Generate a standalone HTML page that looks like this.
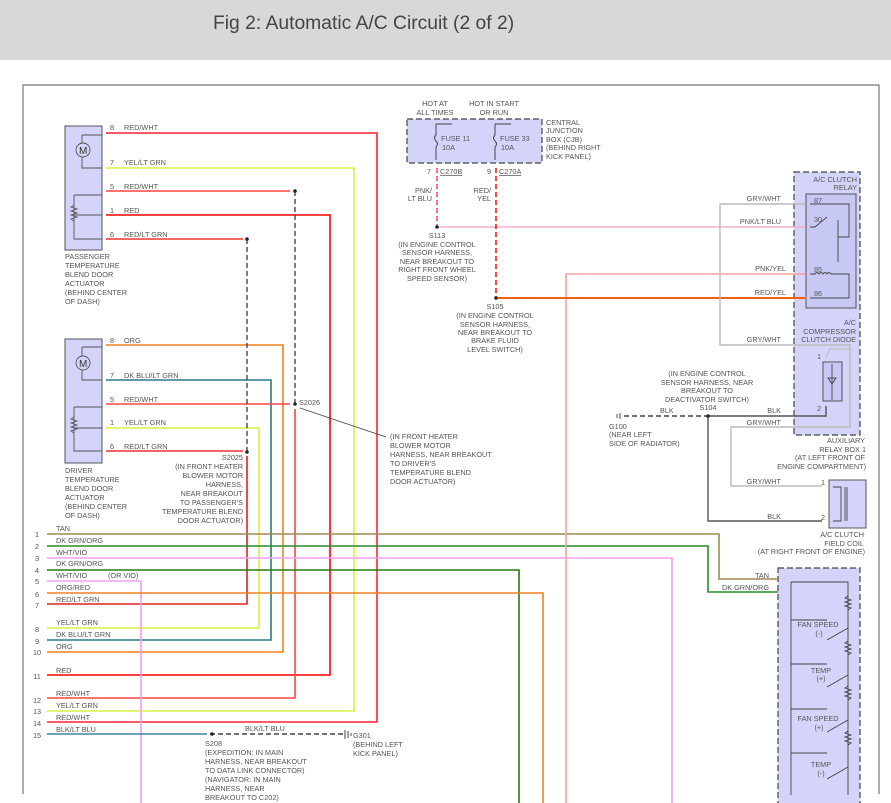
<!DOCTYPE html>
<html><head><meta charset="utf-8"><style>
html,body{margin:0;padding:0;background:#fff;width:891px;height:803px;overflow:hidden}
.hd{position:absolute;left:0;top:0;width:891px;height:60px;background:#d8d8d8}
.hd span{position:absolute;left:213px;top:13px;font:19.3px "Liberation Sans",sans-serif;color:#444}
svg{position:absolute;left:0;top:0}
text{font-family:"Liberation Sans",sans-serif;font-size:7.3px;fill:#555}
</style></head><body>
<div class="hd"><span>Fig 2: Automatic A/C Circuit (2 of 2)</span></div>
<svg width="891" height="803" viewBox="0 0 891 803">
<g fill="none">
<path d="M23 794V85H879V794" stroke="#777" stroke-width="1.2"/>
<rect x="65" y="126" width="37" height="124" fill="#d4d4fa" stroke="#555"/>
<rect x="65" y="339" width="37" height="124" fill="#d4d4fa" stroke="#555"/>
<rect x="407" y="119" width="135" height="44" fill="#d4d4fa" stroke="#444" stroke-dasharray="6,3" stroke-width="1.2"/>
<rect x="794" y="172" width="66" height="263" fill="#d4d4fa" stroke="#444" stroke-dasharray="6,3" stroke-width="1.2"/>
<rect x="806" y="194" width="50" height="114" fill="#c8c8f4" stroke="#555"/>
<rect x="823" y="362" width="19" height="39" fill="#c8c8f4" stroke="#555"/>
<rect x="829" y="480" width="37" height="48" fill="#d4d4fa" stroke="#555"/>
<rect x="778" y="568" width="82" height="240" fill="#d4d4fa" stroke="#444" stroke-dasharray="6,3" stroke-width="1.2"/>
<g stroke="#555" stroke-width="0.9">
<circle cx="83" cy="150" r="7"/><path d="M82 135H102M82 135V143M82 157V168H102M74 195H102M74 195V239H102M74 215H102M74 205l-3 2 6 2-6 2 6 2-6 2 6 2-6 2 3 2"/>
<circle cx="83" cy="363" r="7"/><path d="M82 347H102M82 347V356M82 370V380H102M74 407H102M74 407V451H102M74 428H102M74 417l-3 2 6 2-6 2 6 2-6 2 6 2-6 2 3 2"/>
</g>
<g stroke-width="1.6">
<path d="M106 133H377V722H47" stroke="#f23"/>
<path d="M106 168H354V711H47" stroke="#d8f040"/>
<path d="M106 191H290" stroke="#f44"/>
<path d="M106 215H330V675H47" stroke="#f00"/>
<path d="M106 239H243" stroke="#e33"/>
<path d="M106 345H283V652H47" stroke="#f08020"/>
<path d="M106 380H271V640H47" stroke="#2a7a8a"/>
<path d="M106 404H290" stroke="#f44"/>
<path d="M106 428H259V628H47" stroke="#d8f040"/>
<path d="M106 451H243" stroke="#e33"/>
<path d="M295 409V698H47" stroke="#f44"/>
<path d="M247 456V604H47" stroke="#d22"/>
<path d="M47 534H719V579H778" stroke="#a08a50"/>
<path d="M47 546H708V592H778" stroke="#2a8a2a"/>
<path d="M47 558H672V803" stroke="#f0a0f0"/>
<path d="M47 570H519V803" stroke="#2a7a10"/>
<path d="M47 581H141V803" stroke="#f0a0f0"/>
<path d="M47 593H543V803" stroke="#f08020"/>
<path d="M47 734H207" stroke="#1a6a8a" stroke-width="1.2"/>
<path d="M566 803V274H805" stroke="#f9a0a0"/>
<path d="M437 227H805" stroke="#f4b0c8"/>
<path d="M496 298H805" stroke="#f06010" stroke-width="2"/>
</g>
<g stroke-dasharray="5,3" stroke-width="1.4">
<path d="M295 191V404" stroke="#444"/>
<path d="M247 239V452" stroke="#444"/>
<path d="M437 168V227" stroke="#f37"/>
<path d="M496 168V298" stroke="#e00"/>
<path d="M210 734H343" stroke="#444"/>
<path d="M624 416H708" stroke="#444"/>
</g>
<path d="M805 204H720V345H850V427H731V486H822" stroke="#bbb" stroke-width="1.4"/>
<path d="M708 416H826V406M708 416V521H822" stroke="#555" stroke-width="1.4"/>
<path d="M826 357l4-8h20" stroke="#bbb"/>
<path d="M345 730v9M348 731v7M351 733v3M620 413v6M617 414v4" stroke="#444"/>
<g stroke="#444"><path d="M436 124V135q-3 3 0 6q3 3 0 6V160M436 124H452M495 124V135q-3 3 0 6q3 3 0 6V160M495 124H511"/></g>
<g stroke="#444" stroke-width="0.9">
<path d="M810 204H849V237H838M810 227H815l12-10M838 220V262M810 274H815q2-3 4 0q2-3 4 0q2-3 4 0q2-3 4 0H849V298H810"/>
<path d="M832 364V400M828 378h8l-4 6z"/>
<path d="M833 487h8v34h-8M845 487v34M847 487v34"/>
<path d="M791 582H848V795M791 582V795M791 620H827M791 664H827M791 709H827M791 753H827"/>
<path d="M848 596l-3 2 6 2-6 2 6 2-6 2 6 2-3 2M848 641l-3 2 6 2-6 2 6 2-6 2 6 2-3 2M848 686l-3 2 6 2-6 2 6 2-6 2 6 2-3 2M848 731l-3 2 6 2-6 2 6 2-6 2 6 2-3 2"/>
<path d="M827 640l21-12M827 687l21-12M827 732l21-12M827 779l21-12"/>
</g>
</g>
<g fill="#222">
<circle cx="295" cy="191" r="1.8"/><circle cx="247" cy="239" r="1.8"/><circle cx="295" cy="404" r="1.8"/><circle cx="247" cy="452" r="1.8"/>
<circle cx="437" cy="227" r="1.8"/><circle cx="496" cy="298" r="1.8"/><circle cx="708" cy="416" r="1.8"/><circle cx="212" cy="734" r="1.8"/>
</g>
<path d="M300 408L386 437" stroke="#444" stroke-width="0.8"/>
<text x="79" y="154" style="font-size:10px;fill:#333">M</text><text x="79" y="367" style="font-size:10px;fill:#333">M</text>
<text x="110" y="130">8</text><text x="124" y="130">RED/WHT</text>
<text x="110" y="165">7</text><text x="124" y="165">YEL/LT GRN</text>
<text x="110" y="189">5</text><text x="124" y="189">RED/WHT</text>
<text x="110" y="213">1</text><text x="124" y="213">RED</text>
<text x="110" y="237">6</text><text x="124" y="237">RED/LT GRN</text>
<text x="110" y="343">8</text><text x="124" y="343">ORG</text>
<text x="110" y="378">7</text><text x="124" y="378">DK BLU/LT GRN</text>
<text x="110" y="402">5</text><text x="124" y="402">RED/WHT</text>
<text x="110" y="425">1</text><text x="124" y="425">YEL/LT GRN</text>
<text x="110" y="449">6</text><text x="124" y="449">RED/LT GRN</text>
<text x="65" y="259">PASSENGER</text><text x="65" y="268">TEMPERATURE</text><text x="65" y="277">BLEND DOOR</text><text x="65" y="286">ACTUATOR</text><text x="65" y="295">(BEHIND CENTER</text><text x="65" y="304">OF DASH)</text>
<text x="65" y="473">DRIVER</text><text x="65" y="482">TEMPERATURE</text><text x="65" y="491">BLEND DOOR</text><text x="65" y="500">ACTUATOR</text><text x="65" y="509">(BEHIND CENTER</text><text x="65" y="518">OF DASH)</text>
<text x="299" y="405">S2026</text>
<g text-anchor="end"><text x="243" y="460">S2025</text><text x="243" y="469">(IN FRONT HEATER</text><text x="243" y="478">BLOWER MOTOR</text><text x="243" y="487">HARNESS,</text><text x="243" y="496">NEAR BREAKOUT</text><text x="243" y="505">TO PASSENGER'S</text><text x="243" y="514">TEMPERATURE BLEND</text><text x="243" y="523">DOOR ACTUATOR)</text></g>
<text x="390" y="439">(IN FRONT HEATER</text><text x="390" y="448">BLOWER MOTOR</text><text x="390" y="457">HARNESS, NEAR BREAKOUT</text><text x="390" y="466">TO DRIVER'S</text><text x="390" y="475">TEMPERATURE BLEND</text><text x="390" y="484">DOOR ACTUATOR)</text>
<g text-anchor="middle"><text x="37" y="537">1</text><text x="37" y="549">2</text><text x="37" y="561">3</text><text x="37" y="573">4</text><text x="37" y="584">5</text><text x="37" y="597">6</text><text x="37" y="608">7</text><text x="37" y="632">8</text><text x="37" y="644">9</text><text x="37" y="655">10</text><text x="37" y="679">11</text><text x="37" y="703">12</text><text x="37" y="714">13</text><text x="37" y="726">14</text><text x="37" y="738">15</text></g>
<text x="56" y="531">TAN</text><text x="56" y="543">DK GRN/ORG</text><text x="56" y="555">WHT/VIO</text><text x="56" y="566">DK GRN/ORG</text><text x="56" y="578">WHT/VIO</text><text x="108" y="578">(OR VIO)</text><text x="56" y="590">ORG/RED</text><text x="56" y="602">RED/LT GRN</text><text x="56" y="625">YEL/LT GRN</text><text x="56" y="637">DK BLU/LT GRN</text><text x="56" y="649">ORG</text><text x="56" y="673">RED</text><text x="56" y="696">RED/WHT</text><text x="56" y="708">YEL/LT GRN</text><text x="56" y="720">RED/WHT</text><text x="56" y="732">BLK/LT BLU</text>
<text x="245" y="731">BLK/LT BLU</text>
<text x="205" y="746">S208</text><text x="205" y="755">(EXPEDITION: IN MAIN</text><text x="205" y="764">HARNESS, NEAR BREAKOUT</text><text x="205" y="773">TO DATA LINK CONNECTOR)</text><text x="205" y="782">(NAVIGATOR: IN MAIN</text><text x="205" y="791">HARNESS, NEAR</text><text x="205" y="800">BREAKOUT TO C202)</text>
<text x="353" y="738">G301</text><text x="353" y="747">(BEHIND LEFT</text><text x="353" y="756">KICK PANEL)</text>
<g text-anchor="middle"><text x="435" y="106">HOT AT</text><text x="435" y="115">ALL TIMES</text><text x="494" y="106">HOT IN START</text><text x="494" y="115">OR RUN</text>
<text x="437" y="238">S113</text><text x="437" y="247">(IN ENGINE CONTROL</text><text x="437" y="255">SENSOR HARNESS,</text><text x="437" y="264">NEAR BREAKOUT TO</text><text x="437" y="272">RIGHT FRONT WHEEL</text><text x="437" y="281">SPEED SENSOR)</text>
<text x="495" y="309">S105</text><text x="495" y="318">(IN ENGINE CONTROL</text><text x="495" y="327">SENSOR HARNESS,</text><text x="495" y="335">NEAR BREAKOUT TO</text><text x="495" y="343">BRAKE FLUID</text><text x="495" y="352">LEVEL SWITCH)</text>
<text x="707" y="376">(IN ENGINE CONTROL</text><text x="707" y="385">SENSOR HARNESS, NEAR</text><text x="707" y="393">BREAKOUT TO</text><text x="707" y="402">DEACTIVATOR SWITCH)</text><text x="708" y="410">S104</text></g>
<text x="441" y="141">FUSE 11</text><text x="442" y="150">10A</text><text x="500" y="141">FUSE 33</text><text x="501" y="150">10A</text>
<text x="546" y="125">CENTRAL</text><text x="546" y="133">JUNCTION</text><text x="546" y="142">BOX (CJB)</text><text x="546" y="150">(BEHIND RIGHT</text><text x="546" y="159">KICK PANEL)</text>
<text x="427" y="174">7</text><text x="440" y="174" text-decoration="underline">C270B</text><text x="487" y="174">9</text><text x="499" y="174" text-decoration="underline">C270A</text>
<g text-anchor="end"><text x="432" y="193">PNK/</text><text x="432" y="201">LT BLU</text><text x="491" y="193">RED/</text><text x="491" y="201">YEL</text>
<text x="781" y="201">GRY/WHT</text><text x="781" y="224">PNK/LT BLU</text><text x="786" y="271">PNK/YEL</text><text x="786" y="295">RED/YEL</text><text x="781" y="342">GRY/WHT</text><text x="781" y="413">BLK</text><text x="781" y="425">GRY/WHT</text><text x="781" y="484">GRY/WHT</text><text x="781" y="519">BLK</text>
<text x="857" y="182">A/C CLUTCH</text><text x="857" y="190">RELAY</text><text x="856" y="325">A/C</text><text x="856" y="334">COMPRESSOR</text><text x="856" y="342">CLUTCH DIODE</text>
<text x="865" y="443">AUXILIARY</text><text x="866" y="452">RELAY BOX 1</text><text x="865" y="460">(AT LEFT FRONT OF</text><text x="866" y="469">ENGINE COMPARTMENT)</text>
<text x="864" y="537">A/C CLUTCH</text><text x="864" y="546">FIELD COIL</text><text x="865" y="554">(AT RIGHT FRONT OF ENGINE)</text>
<text x="769" y="578">TAN</text><text x="769" y="590">DK GRN/ORG</text><text x="821" y="359">1</text><text x="821" y="411">2</text><text x="825" y="485">1</text><text x="825" y="520">2</text></g>
<text x="814" y="203">87</text><text x="814" y="222">30</text><text x="814" y="272">85</text><text x="814" y="296">86</text>
<text x="609" y="429">G100</text><text x="609" y="437">(NEAR LEFT</text><text x="609" y="446">SIDE OF RADIATOR)</text><text x="660" y="413">BLK</text>
<g text-anchor="middle"><text x="818" y="627">FAN SPEED</text><text x="819" y="636">(-)</text><text x="821" y="673">TEMP</text><text x="821" y="681">(+)</text><text x="818" y="721">FAN SPEED</text><text x="819" y="730">(+)</text><text x="821" y="767">TEMP</text><text x="821" y="776">(-)</text></g>
</svg>
</body></html>
